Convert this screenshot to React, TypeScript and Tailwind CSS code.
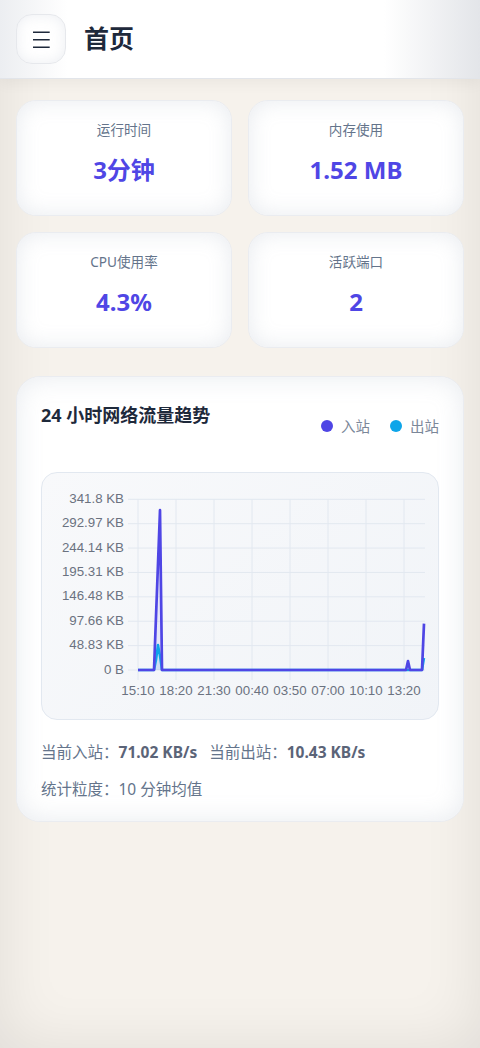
import React from 'react';

const font = { fontFamily: '"Noto Sans", "Noto Sans CJK SC", sans-serif' };

const stats = [
  { label: '运行时间', value: '3分钟' },
  { label: '内存使用', value: '1.52 MB' },
  { label: 'CPU使用率', value: '4.3%' },
  { label: '活跃端口', value: '2' },
];

const yTicks = ['0 B', '48.83 KB', '97.66 KB', '146.48 KB', '195.31 KB', '244.14 KB', '292.97 KB', '341.8 KB'];
const xTicks = ['15:10', '18:20', '21:30', '00:40', '03:50', '07:00', '10:10', '13:20'];

// 144 samples, 10 min each (KB)
const inbound = Array.from({ length: 144 }, () => 0);
inbound[9] = 107;
inbound[10] = 213;
inbound[11] = 320;
inbound[135] = 18;
inbound[143] = 93;

const outbound = Array.from({ length: 144 }, () => 0);
outbound[9] = 20;
outbound[10] = 50;
outbound[11] = 28;
outbound[143] = 24;

const X0 = 96;
const Y0 = 197;
const H = 170.7;
const px = (i: number) => X0 + 2 * i;
const py = (v: number) => Y0 - (v / 341.8) * H;

function linePath(data: number[]) {
  return data.map((v, i) => `${i === 0 ? 'M' : 'L'}${px(i)},${py(v).toFixed(1)}`).join(' ');
}

function areaPath(data: number[]) {
  return `${linePath(data)} L${px(data.length - 1)},${Y0} L${px(0)},${Y0} Z`;
}

const axisFont = { fontFamily: '"Liberation Sans", Arial, sans-serif' };

function TrafficChart() {
  return (
    <svg width="398" height="246" className="block">
      {yTicks.map((t, k) => {
        const y = Y0 - (H / 7) * k;
        return (
          <g key={t}>
            <line x1={86} x2={383} y1={y} y2={y} stroke="#e2e8f0" strokeWidth="1" />
            <text x={82} y={y} textAnchor="end" dominantBaseline="middle" fontSize="13.3" fill="#6b7280" style={axisFont}>
              {t}
            </text>
          </g>
        );
      })}
      {xTicks.map((t, k) => {
        const x = X0 + 38 * k;
        return (
          <g key={t}>
            <line x1={x} x2={x} y1={Y0 - H} y2={207} stroke="#e2e8f0" strokeWidth="1" />
            <text x={x} y={218} textAnchor="middle" dominantBaseline="middle" fontSize="13.3" fill="#6b7280" style={axisFont}>
              {t}
            </text>
          </g>
        );
      })}
      <path d={areaPath(outbound)} fill="#0ea5e9" fillOpacity="0.12" />
      <path d={areaPath(inbound)} fill="#4f46e5" fillOpacity="0.08" />
      <path d={linePath(outbound)} fill="none" stroke="#0ea5e9" strokeWidth="2.5" strokeLinejoin="round" />
      <path d={linePath(inbound)} fill="none" stroke="#4f46e5" strokeWidth="2.7" strokeLinejoin="round" />
    </svg>
  );
}

export default function App() {
  return (
    <div className="min-h-[1048px] bg-[#f6f2ec] shadow-[inset_0_0_60px_rgba(0,0,0,0.09)]" style={font}>
      <header className="h-[79px] flex items-center gap-[18px] px-4 border-b border-[#e2e5ea] bg-[linear-gradient(to_right,#eceef1,#ffffff_14%,#ffffff_80%,#e3e5e9)] shadow-[0_4px_14px_rgba(0,0,0,0.05)]">
        <button className="w-[50px] h-[50px] rounded-2xl border border-[#e6e8ec] bg-white shadow-[inset_0_0_14px_rgba(148,163,184,0.18)] flex items-center justify-center">
          <svg width="18" height="18" viewBox="0 0 18 18">
            <path d="M1 2.3h16.7M1 9.7h16.7M1 17.3h16.7" stroke="#1e293b" strokeWidth="1.6" />
          </svg>
        </button>
        <h1 className="text-[25px] font-bold text-[#1e293b]">首页</h1>
      </header>

      <main className="px-4 pt-[21px] pb-10">
        <div className="grid grid-cols-2 gap-4">
          {stats.map((s) => (
            <div
              key={s.label}
              className="rounded-[20px] border border-[#eaecf0] bg-white shadow-[inset_0_0_22px_rgba(148,163,184,0.22)] pt-5 pb-[29px] flex flex-col items-center"
            >
              <div className="text-[13.6px] leading-[18px] text-[#64748b]">{s.label}</div>
              <div className="mt-[15px] text-2xl leading-8 font-bold text-[#4f46e5]">{s.value}</div>
            </div>
          ))}
        </div>

        <section className="mt-[28px] rounded-[24px] border border-[#eaecf0] bg-white shadow-[inset_0_0_26px_rgba(148,163,184,0.22)] px-6 pt-6 pb-[21px]">
          <div className="flex justify-between items-start">
            <h2 className="text-lg leading-7 font-bold text-[#1e293b]">24 小时网络流量趋势</h2>
            <div className="mt-[15px] flex items-center gap-2 text-[14.5px] leading-5 text-[#7b8799]">
              <span className="w-3 h-3 rounded-full bg-[#4f46e5]" />
              <span>入站</span>
              <span className="ml-3 w-3 h-3 rounded-full bg-[#0ea5e9]" />
              <span>出站</span>
            </div>
          </div>

          <div className="mt-9 rounded-2xl border border-[#e2e8f0] bg-[linear-gradient(135deg,#f8f9fb,#f1f4f8)] overflow-hidden">
            <TrafficChart />
          </div>

          <div className="mt-[21px] text-[15.5px] leading-[22px] text-[#64748b]">
            当前入站：<b className="font-bold text-[#5b6478]">71.02 KB/s</b>
            <span className="ml-3">当前出站：</span>
            <b className="font-bold text-[#5b6478]">10.43 KB/s</b>
          </div>
          <div className="mt-[15px] text-[15.5px] leading-[22px] text-[#64748b]">统计粒度：10 分钟均值</div>
        </section>
      </main>
    </div>
  );
}
